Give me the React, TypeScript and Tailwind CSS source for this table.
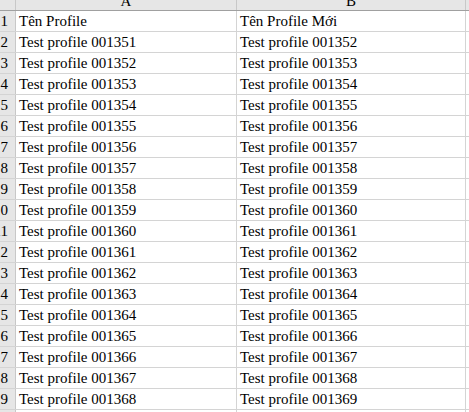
import React from "react";

const font = { fontFamily: '"Liberation Serif", "Times New Roman", serif' };

export default function App() {
  const rows: { n: number; a: string; b: string }[] = [];
  rows.push({ n: 1, a: "Tên Profile", b: "Tên Profile Mới" });
  for (let i = 2; i <= 20; i++) {
    rows.push({
      n: i,
      a: `Test profile 0013${49 + i}`,
      b: `Test profile 0013${50 + i}`,
    });
  }
  return (
    <div
      className="w-[469px] h-[412px] overflow-hidden bg-white text-black text-[15px]"
      style={font}
    >
      {/* header row */}
      <div className="flex h-[11px] border-b border-[#a0a0a0] bg-[#e6e6e6]">
        <div className="w-[16px] shrink-0 border-r border-[#c8c8c8]" />
        <div className="w-[221px] shrink-0 border-r border-[#c8c8c8] overflow-hidden h-[10px]">
          <div className="leading-[20px] mt-[-9px] text-center">A</div>
        </div>
        <div className="w-[229px] shrink-0 border-r border-[#c8c8c8] overflow-hidden h-[10px]">
          <div className="leading-[20px] mt-[-9px] text-center">B</div>
        </div>
        <div className="flex-1" />
      </div>
      {rows.map((r) => (
        <div key={r.n} className="flex h-[21px] border-b border-[#d4d4d4]">
          <div className="w-[16px] shrink-0 bg-[#e6e6e6] border-r border-[#c8c8c8] overflow-hidden flex justify-end">
            <div className="leading-[20px] pr-[7px] whitespace-nowrap">{r.n}</div>
          </div>
          <div className="w-[221px] shrink-0 border-r border-[#d4d4d4] pl-[3px] leading-[20px] whitespace-nowrap overflow-hidden">
            {r.a}
          </div>
          <div className="w-[229px] shrink-0 border-r border-[#d4d4d4] pl-[3px] leading-[20px] whitespace-nowrap overflow-hidden">
            {r.b}
          </div>
          <div className="flex-1" />
        </div>
      ))}
    </div>
  );
}
